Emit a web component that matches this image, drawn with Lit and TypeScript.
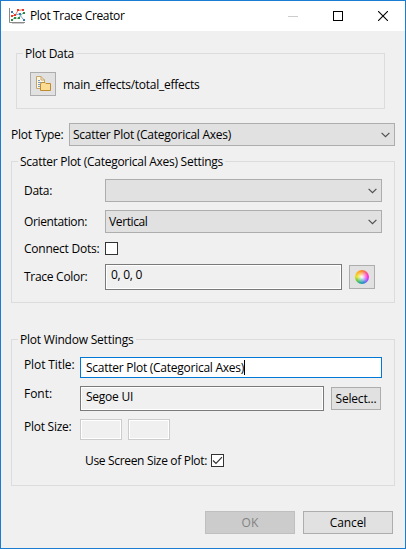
import { LitElement, html, css, svg } from "lit";
import { customElement } from "lit/decorators.js";
import { styleMap } from "lit/directives/style-map.js";

const FONT = '12px "Open Sans", "Noto Sans", sans-serif';
const ctx = document.createElement("canvas").getContext("2d")!;

/** Renders a label tracked so that it occupies the given advance width. */
const label = (text: string, width: number) => {
  ctx.font = FONT;
  const spacing = (width - ctx.measureText(text).width) / text.length;
  return html`<span class="text" style=${styleMap({ letterSpacing: `${spacing.toFixed(3)}px` })}>${text}</span>`;
};

const chevron = html`<svg class="chevron" width="9" height="6" viewBox="0 0 9 6">
  <path d="M.6 .8 4.5 4.7 8.4 .8" fill="none" stroke="#505050" stroke-width="1.2" />
</svg>`;

const dot = (x: number, y: number, c: string) => svg`<rect x=${x} y=${y} width="2" height="2" fill=${c} />`;

@customElement("app-root")
export class AppRoot extends LitElement {
  static styles = css`
    :host { display: block; }
    * { box-sizing: border-box; }
    .window {
      width: 406px; height: 549px; border: 1px solid #1a7dd2; background: #f0f0f0;
      font: 12px/17px "Open Sans", "Noto Sans", sans-serif; color: #000;
      display: flex; flex-direction: column; overflow: hidden;
    }
    .text { white-space: pre; display: block; font-kerning: normal; }
    svg { display: block; flex: none; }
    .titlebar { height: 30px; flex: none; background: #fff; display: flex; align-items: center; padding: 0 17px 0 8px; }
    .titlebar .text { margin-left: 4px; margin-top: -1px; flex: 1; }
    .controls { display: flex; gap: 35px; align-items: center; }
    fieldset { margin: 0; padding: 0; border: 1px solid #dcdcdc; min-width: 0; flex: none; }
    legend { padding: 0 2px; margin-left: 6px; height: 17px; }
    .data { margin: 14px 20px 0 15px; height: 64px; }
    .source { display: flex; align-items: center; gap: 7px; padding: 10px 0 0 13px; }
    .button { border: 1px solid #adadad; background: #e1e1e1; display: flex; align-items: center; justify-content: center; height: 23px; flex: none; }
    .button.icon { width: 26px; height: 24px; }
    .type { margin: 14px 10px 0 10px; display: grid; grid-template-columns: 58px 1fr; height: 23px; align-items: center; flex: none; }
    .select { height: 23px; border: 1px solid #adadad; background: #e1e1e1; display: flex; align-items: center; justify-content: space-between; padding: 0 4px 0 3px; }
    .chevron { margin-left: auto; }
    .settings { margin: 7px 10px 0; height: 150px; }
    .rows { display: grid; grid-template-columns: 81px 277px; grid-template-rows: 23px 23px 13px 26px; row-gap: 8px; align-items: center; padding: 9px 0 0 12px; }
    .check { width: 13px; height: 13px; border: 1px solid #333; background: #fff; flex: none; }
    .connect { margin-top: 1px; height: 13px; display: flex; align-items: center; }
    .rows .check { margin-top: 1px; }
    .trace { margin-top: 3px; height: 26px; display: flex; align-items: center; }
    .field { border: 1px solid #7a7a7a; background: #f0f0f0; box-shadow: inset 0 0 0 1px #fff; padding: 1px 0 0 5px; flex: none; }
    .color { width: 237px; height: 26px; margin-right: 7px; }
    .plot { margin: 28px 10px 0; height: 155px; }
    .form { padding: 9px 0 0 12px; display: flex; flex-direction: column; }
    .line { display: grid; grid-template-columns: 56px 302px; align-items: start; }
    .line > .text { margin-top: -1px; }
    .title { height: 21px; background: #fff; border-color: #0078d7; display: flex; align-items: center; padding: 0 0 0 5px; }
    .caret { width: 1px; height: 15px; background: #000; }
    .fontline { margin-top: 8px; height: 25px; }
    .font { width: 244px; height: 25px; }
    .pair { display: flex; align-items: center; }
    .pick { width: 50px; margin-left: 7px; }
    .size { margin-top: 8px; height: 21px; }
    .num { width: 42px; height: 21px; border-color: #ccc; margin-right: 6px; }
    .screen { display: flex; align-items: center; padding-left: 61px; margin-top: 12px; height: 17px; }
    .screen .check { margin-left: 4px; }
    .footer { display: flex; justify-content: flex-end; gap: 8px; margin: 25px 12px 0 0; }
    .footer .button { width: 90px; }
    .off { background: #ccc; border-color: #bfbfbf; color: #838383; }
    .wheel { width: 14px; height: 14px; border-radius: 50%;
      background: radial-gradient(circle, #fff 0, #fff8 28%, #fff0 60%), conic-gradient(#f58a2c, #f85a90 45deg, #fb28e8 90deg, #9060f0 130deg, #2c8ad0 165deg, #20a8a0 195deg, #70c840 235deg, #e8e010 275deg, #ffb020 320deg, #f58a2c); }
  `;

  render() {
    return html`<div class="window">
      <div class="titlebar">
        <svg width="17" height="16" viewBox="0 0 17 16">
          <path d="M.5 0V14.5H16" fill="none" stroke="#8a8a8a" />
          <path d="M3 15.5H15" stroke="#ccc" />
          <path d="M3 7.5H6L9 2.5 15 1.5" fill="none" stroke="#f0705c" />
          <path d="M3 12 6 9.5 9 10.5 14.5 4.5" fill="none" stroke="#70b880" />
          <path d="M3 4 6 7 10 6 14.5 11.5" fill="none" stroke="#78a8c8" />
          ${dot(2, 7, "#e23a2c")}${dot(5, 6, "#e23a2c")}${dot(8, 1, "#e23a2c")}${dot(13, 1, "#e23a2c")}
          ${dot(2, 11, "#2a8a48")}${dot(5, 9, "#2a8a48")}${dot(9, 9, "#2a8a48")}${dot(14, 4, "#2a8a48")}
          ${dot(2, 3, "#3878b0")}${dot(10, 5, "#3878b0")}${dot(14, 11, "#3878b0")}
        </svg>
        ${label("Plot Trace Creator", 94.5)}
        <div class="controls">
          <svg width="10" height="10"><path d="M0 5.5H10" stroke="#ccc" /></svg>
          <svg width="10" height="10"><rect x=".5" y=".5" width="9" height="9" fill="none" stroke="#000" /></svg>
          <svg width="10" height="10"><path d="M0 0 10 10M10 0 0 10" stroke="#000" stroke-width="1.1" /></svg>
        </div>
      </div>

      <fieldset class="data">
        <legend>${label("Plot Data", 49)}</legend>
        <div class="source">
          <div class="button icon">
            <svg width="16" height="16" viewBox="0 0 16 16">
              <path d="M1.5 .5H6L9.5 4V12.5H1.5Z" fill="#fdf6e2" stroke="#c4a468" />
              <path d="M6 .5V4H9.5" fill="none" stroke="#c4a468" />
              <path d="M3 4.5H5M3 6.5H8M3 8.5H6M3 10.5H5" stroke="#7a9cc8" />
              <path d="M5.5 8V14.5H15.5V7.5H11L10 6.5H6.5Z" fill="#fbdc92" stroke="#c08a30" />
            </svg>
          </div>
          ${label("main_effects/total_effects", 136.5)}
        </div>
      </fieldset>

      <div class="type">
        ${label("Plot Type:", 52.5)}
        <div class="select">${label("Scatter Plot (Categorical Axes)", 158)}${chevron}</div>
      </div>

      <fieldset class="settings">
        <legend>${label("Scatter Plot (Categorical Axes) Settings", 203)}</legend>
        <div class="rows">
          ${label("Data:", 28)}
          <div class="select">${chevron}</div>
          ${label("Orientation:", 63)}
          <div class="select">${label("Vertical", 38.5)}${chevron}</div>
          <div class="connect">${label("Connect Dots:", 75.5)}</div>
          <div class="check"></div>
          <div class="trace">${label("Trace Color:", 63.5)}</div>
          <div class="trace">
            <div class="field color">${label("0, 0, 0", 31)}</div>
            <div class="button icon"><div class="wheel"></div></div>
          </div>
        </div>
      </fieldset>

      <fieldset class="plot">
        <legend>${label("Plot Window Settings", 113.5)}</legend>
        <div class="form">
          <div class="line">
            ${label("Plot Title:", 50.5)}
            <div class="field title">${label("Scatter Plot (Categorical Axes)", 158)}<div class="caret"></div></div>
          </div>
          <div class="line fontline">
            ${label("Font:", 28)}
            <div class="pair">
              <div class="field font">${label("Segoe UI", 47)}</div>
              <div class="button pick">${label("Select...", 41)}</div>
            </div>
          </div>
          <div class="line size">
            ${label("Plot Size:", 47.5)}
            <div class="pair"><div class="field num"></div><div class="field num"></div></div>
          </div>
          <div class="screen">
            ${label("Use Screen Size of Plot:", 122)}
            <div class="check">
              <svg width="11" height="11" viewBox="0 0 11 11"><path d="M1 5.5 4 8.5 10 2.2" fill="none" stroke="#333" stroke-width="1.2" /></svg>
            </div>
          </div>
        </div>
      </fieldset>

      <div class="footer">
        <div class="button off">${label("OK", 17)}</div>
        <div class="button">${label("Cancel", 36.5)}</div>
      </div>
    </div>`;
  }
}
